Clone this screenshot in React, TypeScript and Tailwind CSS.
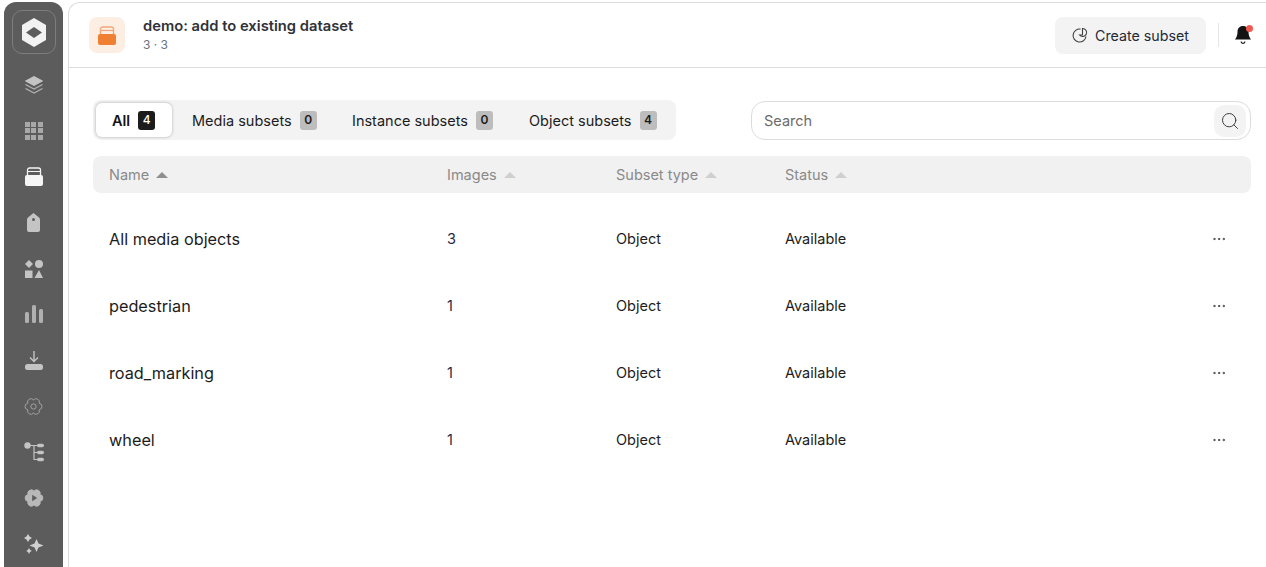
import { Search, Ellipsis } from 'lucide-react';
import type { ReactNode } from 'react';

const rows = [
  { name: 'All media objects', images: 3 },
  { name: 'pedestrian', images: 1 },
  { name: 'road_marking', images: 1 },
  { name: 'wheel', images: 1 },
];

const tabs = [
  { label: 'Media subsets', count: 0, width: 'w-[160px]' },
  { label: 'Instance subsets', count: 0, width: 'w-[177px]' },
  { label: 'Object subsets', count: 4, width: 'w-[147px]' },
];

const flower =
  'M12 4.5A3.8 3.8 0 0 1 18.5 8.25A3.8 3.8 0 0 1 18.5 15.75A3.8 3.8 0 0 1 12 19.5A3.8 3.8 0 0 1 5.5 15.75A3.8 3.8 0 0 1 5.5 8.25A3.8 3.8 0 0 1 12 4.5Z';

function SideIcon({ children }: { children: ReactNode }) {
  return <div className="flex h-[46px] w-full items-center justify-center">{children}</div>;
}

function BagIcon({ className, rim }: { className: string; rim: string }) {
  return (
    <svg viewBox="0 0 18 19" className={className}>
      <path d="M2.5 8V3a2 2 0 0 1 2-2h9a2 2 0 0 1 2 2v5" fill="none" stroke={rim} strokeWidth="1.3" />
      <path d="M2.5 4.5h13" stroke={rim} strokeWidth="1.2" />
      <rect x="0" y="8" width="18" height="11" rx="2" fill="currentColor" />
    </svg>
  );
}

function Sidebar() {
  return (
    <div className="flex h-[565px] w-[59px] shrink-0 flex-col items-center overflow-hidden rounded-t-[12px] bg-[#5c5c5c] pt-2 text-[#a3a3a3]">
      <div className="mb-2 flex h-[44px] w-[44px] items-center justify-center rounded-[10px] border border-[#7d7d7d] pt-px">
        <svg viewBox="0 0 24 29" className="h-[29px] w-6 text-[#f2f2f2]">
          <path fillRule="evenodd" fill="currentColor" d="M12 0 24 7v15l-12 7-12-7V7Zm0 9L4 14.5 12 20l8-5.5Z" />
        </svg>
      </div>
      <SideIcon>
        <svg viewBox="0 0 20 20" className="h-5 w-5">
          <path d="M10 1.5 18.5 6 10 10.5 1.5 6Z" fill="#c4c4c4" stroke="#c4c4c4" strokeLinejoin="round" />
          <path d="M1.5 9.5 10 14l8.5-4.5M1.5 13.5 10 18l8.5-4.5" fill="none" stroke="#b0b0b0" strokeWidth="1.3" />
        </svg>
      </SideIcon>
      <SideIcon>
        <div className="grid grid-cols-3 gap-[1.5px]">
          {Array.from({ length: 9 }).map((_, i) => (
            <div key={i} className="h-[5px] w-[5px] bg-[#a8a8a8]" />
          ))}
        </div>
      </SideIcon>
      <SideIcon>
        <BagIcon className="h-[19px] w-[18px] text-[#f5f5f5]" rim="#f5f5f5" />
      </SideIcon>
      <SideIcon>
        <svg viewBox="0 0 13 19" className="h-[19px] w-[13px]">
          <path fillRule="evenodd" fill="#c4c4c4" d="M6.5 0 12 4.5c.6.5 1 1.2 1 2V17a2 2 0 0 1-2 2H2a2 2 0 0 1-2-2V6.5c0-.8.4-1.5 1-2Zm0 5a1.500 1.500 0 1 0 0 3 1.500 1.500 0 0 0 0-3Z" />
        </svg>
      </SideIcon>
      <SideIcon>
        <svg viewBox="0 0 18 18" className="h-[18px] w-[18px]" fill="#c4c4c4">
          <path d="M4 0 8 4 4 8 0 4Z" />
          <circle cx="14" cy="4" r="4" />
          <rect x="0" y="10.5" width="7.5" height="7.5" />
          <path d="M14 10 18 18H9.5Z" />
        </svg>
      </SideIcon>
      <SideIcon>
        <svg viewBox="0 0 18 18" className="h-[18px] w-[18px]" fill="#b0b0b0">
          <rect x="0" y="7" width="4" height="11" rx="1.5" />
          <rect x="7" y="0" width="4" height="18" rx="1.5" />
          <rect x="14" y="4" width="4" height="14" rx="1.5" />
        </svg>
      </SideIcon>
      <SideIcon>
        <svg viewBox="0 0 18 19" className="h-[19px] w-[18px]">
          <path d="M9 0v10M5 6.5l4 4 4-4" fill="none" stroke="#c4c4c4" strokeWidth="1.4" />
          <rect x="0" y="13" width="18" height="6" rx="2.5" fill="#c4c4c4" />
        </svg>
      </SideIcon>
      <SideIcon>
        <svg viewBox="0 0 24 24" className="h-[21px] w-[21px]" fill="none" stroke="#a3a3a3" strokeWidth="1.1">
          <path d={flower} />
          <circle cx="12" cy="12" r="3" />
        </svg>
      </SideIcon>
      <SideIcon>
        <svg viewBox="0 0 20 20" className="h-5 w-5 text-[#c4c4c4]">
          <circle cx="3.5" cy="3.5" r="3.2" fill="currentColor" />
          <path d="M3.5 3.5H16M10 3.5v14h6M10 10.5h6" fill="none" stroke="currentColor" strokeWidth="1.2" />
          <rect x="13" y="1.8" width="7" height="3.4" rx="1.7" fill="currentColor" />
          <rect x="13" y="8.8" width="7" height="3.4" rx="1.7" fill="currentColor" />
          <rect x="13" y="15.8" width="7" height="3.4" rx="1.7" fill="currentColor" />
        </svg>
      </SideIcon>
      <SideIcon>
        <svg viewBox="0 0 24 24" className="h-[22px] w-[22px]">
          <path d={flower} fill="#b8b8b8" stroke="#b8b8b8" strokeWidth="1" />
          <path d="M10 8.5v7l5.500-3.500Z" fill="#5c5c5c" />
        </svg>
      </SideIcon>
      <SideIcon>
        <svg viewBox="0 0 20 20" className="h-5 w-5" fill="#d0d0d0">
          <path d="M12.5 5 14.5 9.5 19.5 11.5 14.5 13.5 12.5 18 10.5 13.5 5.5 11.5 10.5 9.5Z" />
          <path d="M4 0 5.5 2.5 8 4 5.5 5.5 4 8 2.5 5.5 0 4 2.5 2.5Z" />
          <path d="M5 14 6 15.800 7.800 17 6 18 5 20 4 18 2.200 17 4 15.800Z" />
        </svg>
      </SideIcon>
    </div>
  );
}

function Tab({ label, count, width }: { label: string; count: number; width: string }) {
  return (
    <div className={`flex h-[34px] items-center gap-2 whitespace-nowrap pl-5 text-[14.5px] text-[#1c1c1c] ${width}`}>
      <span className="pt-px">{label}</span>
      <span className="flex h-[19px] w-[17px] shrink-0 items-center justify-center rounded-[3px] bg-[#bdbdbd] text-[12px] font-semibold leading-none">
        {count}
      </span>
    </div>
  );
}

function HeaderCell({ label, className, dark }: { label: string; className: string; dark?: boolean }) {
  return (
    <div className={`flex items-center gap-[7px] ${className}`}>
      <span>{label}</span>
      <svg viewBox="0 0 12 8" className="h-2 w-3">
        <path d="M6 1 12 7H0Z" fill={dark ? '#8f8f8f' : '#cfcfcf'} />
      </svg>
    </div>
  );
}

export default function App() {
  return (
    <div className="flex h-[567px] overflow-hidden bg-white pl-1 pt-[2px] font-['Inter',sans-serif]">
      <Sidebar />
      <div className="ml-[5px] h-[570px] min-w-0 flex-1 rounded-tl-[12px] border-l border-t border-[#dcdcdc] bg-white">
        <header className="flex h-[65px] items-center border-b border-[#dcdcdc] pl-5 pr-[14px]">
          <div className="flex h-9 w-9 items-center justify-center rounded-[8px] bg-[#fdeee4]">
            <BagIcon className="h-[19px] w-[18px] text-[#ee7f33]" rim="#f0a679" />
          </div>
          <div className="ml-[18px] flex-1">
            <div className="text-[14.75px] font-semibold leading-[18px] text-[#2f3237]">demo: add to existing dataset</div>
            <div className="mt-[2px] text-[12px] leading-4 text-[#6b7280]">3 · 3</div>
          </div>
          <button className="flex h-[37px] w-[151px] items-center justify-center gap-[7px] rounded-[8px] bg-[#f3f3f3] text-[14.25px] text-[#1f2a37]">
            <svg viewBox="0 0 16 16" className="h-4 w-4" fill="none" stroke="#404040" strokeWidth="1.1">
              <path d="M8.5 2.1A6.5 6.5 0 1 0 14 9.5" />
              <path d="M10.5 1.5a4 4 0 1 1-3 6.5h3Z" />
            </svg>
            <span className="pt-px">Create subset</span>
          </button>
          <div className="ml-3 mr-[15px] h-6 w-px bg-[#e5e5e5]" />
          <div className="relative h-5 w-[18px]">
            <svg viewBox="0 0 18 20" className="h-5 w-[18px]" fill="#141414">
              <path d="M9 1c3.500 0 5.500 2.500 5.500 6 0 3 .8 5 2.500 7.500H1C2.700 12 3.500 10 3.500 7 3.500 3.500 5.500 1 9 1Z" />
              <path d="M6.500 16.500a2.500 2.500 0 0 0 5 0h-1.200a1.300 1.300 0 0 1-2.600 0Z" />
            </svg>
            <div className="absolute right-[-1px] top-0 h-[7px] w-[7px] rounded-full bg-[#ef5a50]" />
          </div>
        </header>

        <main className="pl-6 pr-[15px] pt-8">
          <div className="flex items-start justify-between">
            <div className="flex h-10 w-[583px] items-center rounded-[8px] bg-[#f3f3f3] pl-[3px]">
              <div className="flex h-[34px] w-[76px] items-center gap-2 rounded-[6px] bg-white pl-4 text-[14.5px] font-semibold text-[#141414] shadow-[0_0_3px_rgba(0,0,0,0.3)]">
                <span className="pt-px">All</span>
                <span className="flex h-[19px] w-[17px] items-center justify-center rounded-[3px] bg-[#1c1c1c] text-[12px] font-medium leading-none text-white">
                  4
                </span>
              </div>
              {tabs.map((tab) => (
                <Tab key={tab.label} {...tab} />
              ))}
            </div>
            <div className="mt-px flex h-[39px] w-[500px] items-center justify-between rounded-[14px] border border-[#dcdcdc] pl-3 pr-1 text-[14.5px] text-[#6b6b6b]">
              <span>Search</span>
              <div className="flex h-8 w-8 items-center justify-center rounded-[10px] bg-[#f3f3f3]">
                <Search size={20} strokeWidth={1.2} color="#404040" />
              </div>
            </div>
          </div>

          <div className="mt-4 flex h-[37px] items-center rounded-[8px] bg-[#f1f1f1] pl-4 text-[14.5px] text-[#8a8a8a]">
            <HeaderCell label="Name" className="w-[338px]" dark />
            <HeaderCell label="Images" className="w-[169px]" />
            <HeaderCell label="Subset type" className="w-[169px]" />
            <HeaderCell label="Status" className="w-[169px]" />
          </div>

          <div className="mt-3">
            {rows.map((row) => (
              <div key={row.name} className="flex h-[67px] items-center pl-4 text-[14.5px] text-[#1c1c1c]">
                <div className="w-[338px] pt-px text-[16.25px]">{row.name}</div>
                <div className="w-[169px] text-[#1f2a44]">{row.images}</div>
                <div className="w-[169px]">Object</div>
                <div className="flex-1">Available</div>
                <Ellipsis size={16} strokeWidth={1.5} color="#404040" className="mr-6" />
              </div>
            ))}
          </div>
        </main>
      </div>
    </div>
  );
}
